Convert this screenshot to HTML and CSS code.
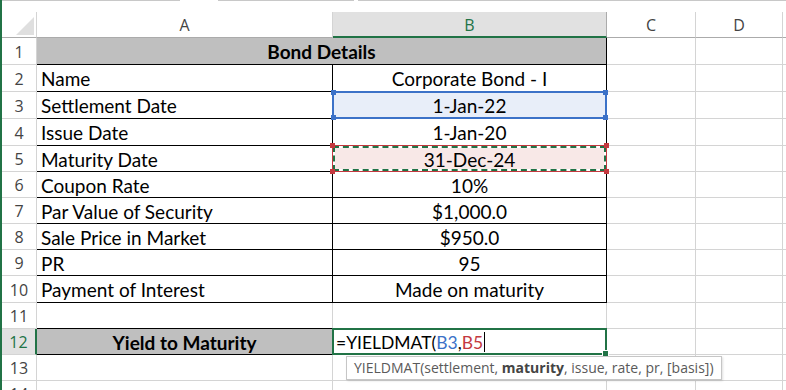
FILE: index.html
```html
<!DOCTYPE html>
<html>
<head>
<meta charset="utf-8">
<link rel="stylesheet" href="styles.css">
</head>
<body>
<div class="app">
  <div class="topbar"><span class="seg s1"></span><span class="seg s2"></span><span class="seg s3"></span></div>
  <div class="sheet">
    <div class="corner"><svg width="18" height="18" viewBox="0 0 18 18"><polygon points="18,0 18,18 0,18" fill="#dfdfdf"/></svg></div>
    <div class="ch">A</div>
    <div class="ch sel">B</div>
    <div class="ch">C</div>
    <div class="ch">D</div>
    <div class="ch end"></div>

    <div class="rh">1</div>
    <div class="c title span2 bk-r bk-b">Bond Details</div>
    <div class="c"></div><div class="c"></div><div class="c end"></div>

    <div class="rh">2</div>
    <div class="c lab bk-r bk-b">Name</div>
    <div class="c val bk-r bk-b">Corporate Bond - I</div>
    <div class="c"></div><div class="c"></div><div class="c end"></div>

    <div class="rh">3</div>
    <div class="c lab bk-r bk-b">Settlement Date</div>
    <div class="c val bk-r bk-b ref-blue">
      <div class="refbox blue"><i class="h tl"></i><i class="h tr"></i><i class="h bl"></i><i class="h br"></i></div>
      <span class="txt">1-Jan-22</span>
    </div>
    <div class="c"></div><div class="c"></div><div class="c end"></div>

    <div class="rh">4</div>
    <div class="c lab bk-r bk-b">Issue Date</div>
    <div class="c val bk-r bk-b">1-Jan-20</div>
    <div class="c"></div><div class="c"></div><div class="c end"></div>

    <div class="rh">5</div>
    <div class="c lab bk-r bk-b">Maturity Date</div>
    <div class="c val bk-r bk-b">
      <div class="refbox red"><div class="ants"></div><i class="h tl"></i><i class="h tr"></i><i class="h bl"></i><i class="h br"></i></div>
      <span class="txt">31-Dec-24</span>
    </div>
    <div class="c"></div><div class="c"></div><div class="c end"></div>

    <div class="rh">6</div>
    <div class="c lab bk-r bk-b">Coupon Rate</div>
    <div class="c val bk-r bk-b">10%</div>
    <div class="c"></div><div class="c"></div><div class="c end"></div>

    <div class="rh">7</div>
    <div class="c lab bk-r bk-b">Par Value of Security</div>
    <div class="c val bk-r bk-b">$1,000.0</div>
    <div class="c"></div><div class="c"></div><div class="c end"></div>

    <div class="rh">8</div>
    <div class="c lab bk-r bk-b">Sale Price in Market</div>
    <div class="c val bk-r bk-b">$950.0</div>
    <div class="c"></div><div class="c"></div><div class="c end"></div>

    <div class="rh">9</div>
    <div class="c lab bk-r bk-b">PR</div>
    <div class="c val bk-r bk-b">95</div>
    <div class="c"></div><div class="c"></div><div class="c end"></div>

    <div class="rh">10</div>
    <div class="c lab bk-r bk-b">Payment of Interest</div>
    <div class="c val bk-r bk-b">Made on maturity</div>
    <div class="c"></div><div class="c"></div><div class="c end"></div>

    <div class="rh">11</div>
    <div class="c bk-b"></div>
    <div class="c"></div>
    <div class="c"></div><div class="c"></div><div class="c end"></div>

    <div class="rh act">12</div>
    <div class="c title bk-b">Yield to Maturity</div>
    <div class="c edit">
      <div class="editbox"><i class="fill"></i></div>
      <span class="formula">=YIELDMAT(<span class="fb">B3</span>,<span class="fr">B5</span><span class="caret"></span></span>
      <div class="tip">YIELDMAT(settlement, <b>maturity</b>, issue, rate, pr, [basis])</div>
    </div>
    <div class="c"></div><div class="c"></div><div class="c end"></div>

    <div class="rh">13</div>
    <div class="c"></div><div class="c"></div><div class="c"></div><div class="c"></div><div class="c end"></div>

    <div class="rh">14</div>
    <div class="c"></div><div class="c"></div><div class="c"></div><div class="c"></div><div class="c end"></div>
  </div>
</div>
</body>
</html>
```

FILE: styles.css
```css
html, body {
  margin: 0;
  padding: 0;
  background: #ffffff;
}
.app {
  width: 784px;
  height: 390px;
  overflow: hidden;
  border-left: 2px solid #217346;
  font-family: Lato, "Liberation Sans", sans-serif;
  color: #000;
}
.topbar {
  height: 12px;
  display: flex;
  align-items: flex-start;
}
.seg {
  display: block;
  height: 1px;
  background: #c8c8c8;
}
.s1 { width: 178px; margin-left: 0; }
.s2 { width: 136px; margin-left: 38px; }
.s3 { flex: 1; margin-left: 4px; }

.sheet {
  display: grid;
  grid-template-columns: 35px 296px 274px 89px 87px 1fr;
  grid-template-rows: 26px 27px 27px 27px 27px 26px 26px 26px 26px 26px 27px 26px 26px 26px 26px;
}
.corner {
  border-right: 1px solid #d4d4d4;
  border-bottom: 1px solid #ababab;
  display: flex;
  align-items: flex-end;
  justify-content: flex-end;
  padding: 0 2px 2px 0;
}
.corner svg { display: block; }
.ch {
  border-right: 1px solid #d4d4d4;
  border-bottom: 1px solid #ababab;
  display: flex;
  align-items: center;
  justify-content: center;
  font-family: "Open Sans", sans-serif;
  font-size: 16px;
  color: #444;
  padding-top: 1px;
}
.ch.sel {
  background: #e1e1e1;
  color: #217346;
  border-bottom: 2px solid #217346;
  border-right-color: #ababab;
}
.ch.end { border-right: none; }
.rh {
  border-right: 1px solid #d4d4d4;
  border-bottom: 1px solid #d4d4d4;
  display: flex;
  align-items: center;
  justify-content: center;
  font-family: "Open Sans", sans-serif;
  font-size: 16px;
  color: #444;
  padding-top: 1px;
}
.rh.act {
  background: #e1e1e1;
  color: #217346;
  border-right: 2px solid #217346;
}
.c {
  border-right: 1px solid #d4d4d4;
  border-bottom: 1px solid #d4d4d4;
  display: flex;
  align-items: center;
  font-size: 19px;
  white-space: nowrap;
  position: relative;
  padding-top: 1px;
}
.c.end { border-right: none; }
.span2 { grid-column: span 2; }
.bk-r { border-right-color: #000; }
.bk-b { border-bottom-color: #000; }
.title {
  background: #bfbfbf;
  font-weight: 700;
  justify-content: center;
}
.lab { padding-left: 4px; }
.val { justify-content: center; }
.txt { position: relative; z-index: 2; }

.refbox {
  position: absolute;
  left: -1px;
  top: -1px;
  right: -1px;
  bottom: -1px;
  z-index: 1;
}
.refbox.blue {
  border: 2px solid #3c72c8;
  background: #e8eef9;
}
.refbox.red {
  border: 1px solid #c4393f;
  background: #ffffff;
}
.ants {
  position: absolute;
  inset: 0;
  border: 2px dashed #217346;
  background: #f8e8e7;
  background-clip: padding-box;
}
.h {
  position: absolute;
  width: 5px;
  height: 5px;
  z-index: 3;
}
.blue .h { background: #3c72c8; }
.red .h { background: #c4393f; }
.h.tl { left: -3px; top: -3px; }
.h.tr { right: -3px; top: -3px; }
.h.bl { left: -3px; bottom: -3px; }
.h.br { right: -3px; bottom: -3px; }

.edit { overflow: visible; }
.editbox {
  position: absolute;
  left: -1px;
  top: -1px;
  right: -1px;
  bottom: -1px;
  border: 2px solid #217346;
  z-index: 1;
}
.fill {
  position: absolute;
  right: -4px;
  bottom: -4px;
  width: 5px;
  height: 5px;
  background: #217346;
  border: 1px solid #fff;
}
.formula {
  position: relative;
  z-index: 2;
  padding-left: 3px;
  font-size: 17.5px;
  display: flex;
  align-items: center;
}
.fb { color: #3c72c8; }
.fr { color: #c4393f; }
.caret {
  display: inline-block;
  width: 1px;
  height: 20px;
  background: #000;
  margin-left: 1px;
}
.tip {
  position: absolute;
  left: 13px;
  top: 27px;
  z-index: 5;
  background: #fff;
  border: 1px solid #c6c6c6;
  box-shadow: 1px 1px 2px rgba(0,0,0,0.12);
  padding: 1px 7px 2px 7px;
  font-family: "Open Sans", sans-serif;
  font-size: 14px;
  line-height: 19px;
  color: #5a5a5a;
}
.tip b { color: #444; font-weight: 700; }
```
